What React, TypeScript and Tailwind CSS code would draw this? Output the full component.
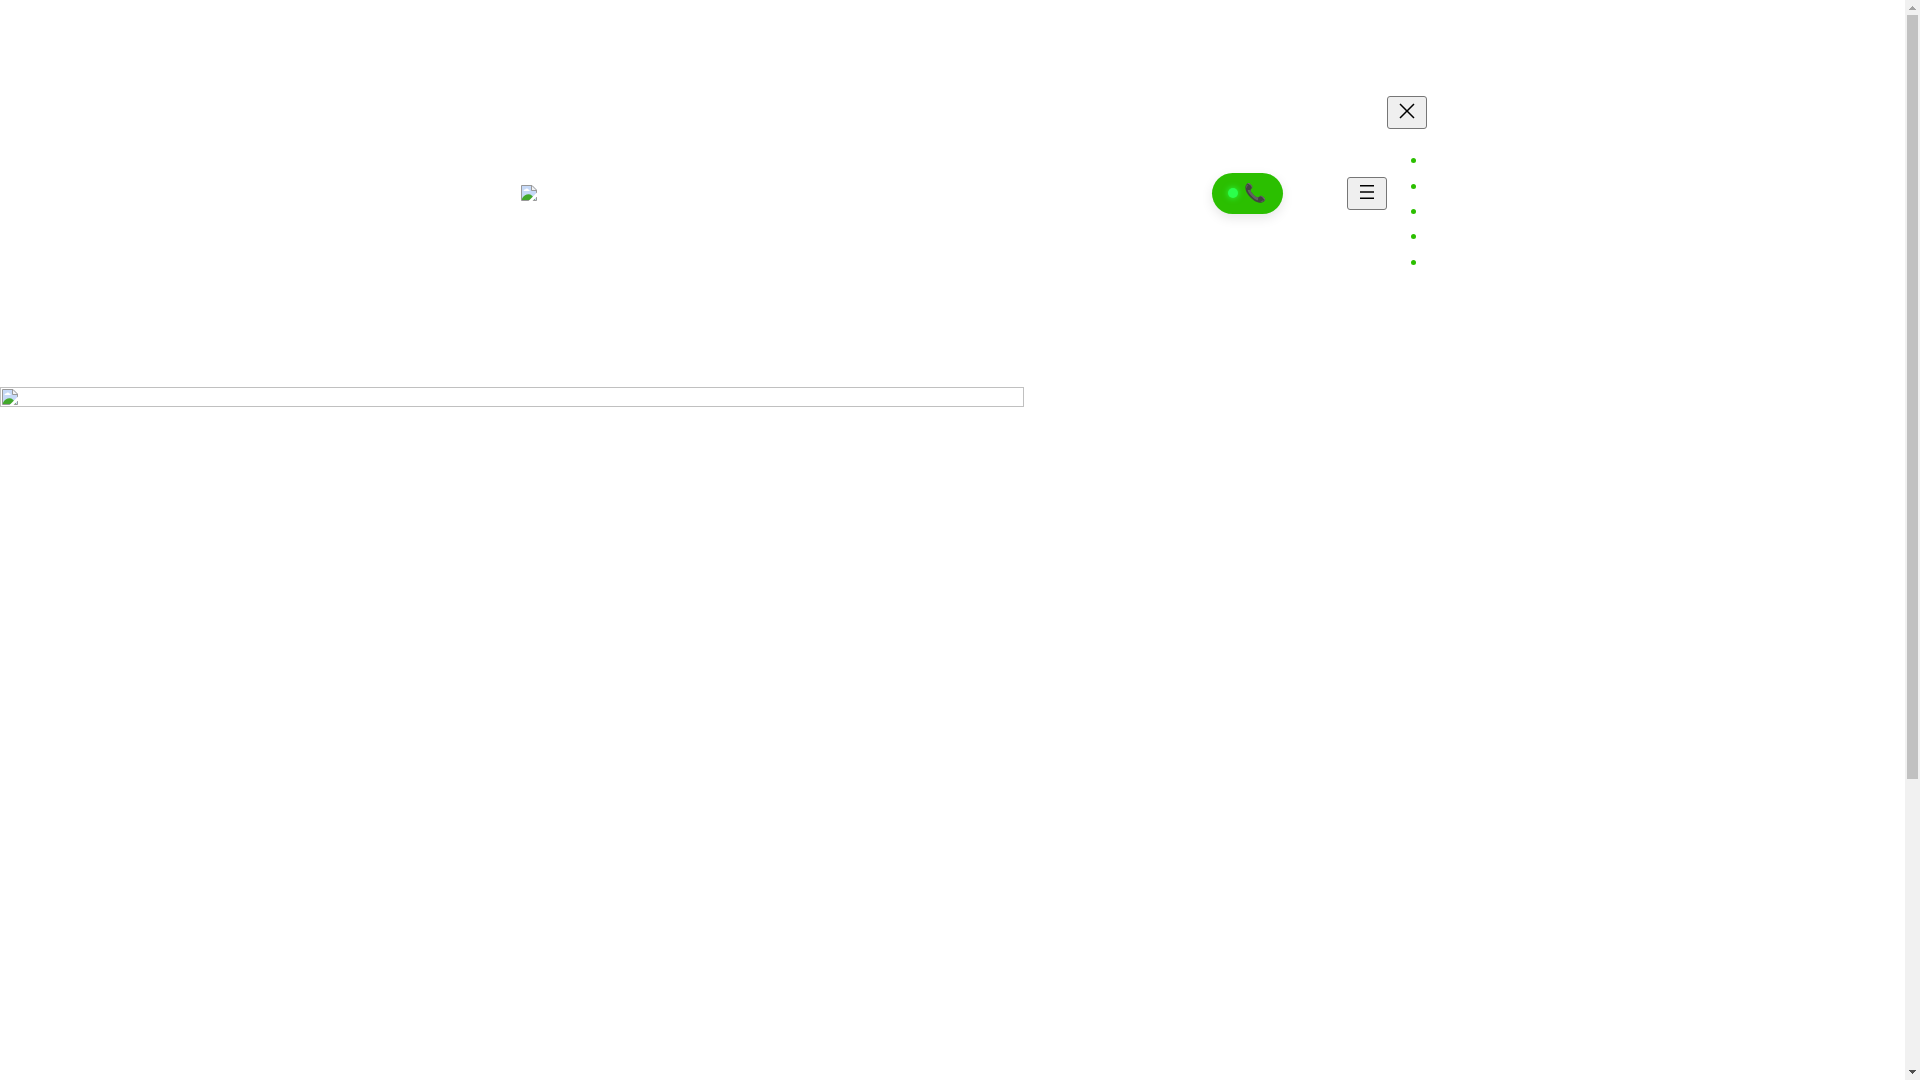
function BrokenImage() {
  return (
    <svg width="16" height="16" viewBox="0 0 16 16" className="block shrink-0" aria-hidden="true">
      <path d="M.5.5h10.500l4.500 4.500v10.500H.5z" fill="#c6d9f7" />
      <path d="M2.500 6c0-1.200.8-1.700 1.700-1.600C4.700 3 7 3.100 7.300 4.600c1 0 1.500.7 1.300 1.400z" fill="#fff" />
      <path d="M1 15v-1.500c2-3 4-4.300 6.500-4.300s4.800 2 6.500 5.800z" fill="#43a92c" />
      <path d="M10.500.5v5h5" fill="#f4f4f4" stroke="#999" />
      <path d="M.5.5h10.500l4.500 4.500v10.500H.5z" fill="none" stroke="#999" />
      <path d="M7.500 16 16 7.500v4L11.500 16z" fill="#fff" />
    </svg>
  )
}

const menuItems = ['1', '2', '3', '4', '5']

const iconButton =
  'flex h-[33px] w-10 justify-center rounded-[3px] border border-[#767676] bg-[#efefef] pt-[2px] text-black'

function Header() {
  return (
    <header className="py-24 pl-[59px] pr-4">
      <div className="mx-auto flex max-w-[906px] items-center">
        <a href="#" aria-label="Home" className="pb-[2px]">
          <BrokenImage />
        </a>

        <a
          href="#"
          aria-label="Call"
          className="ml-auto mr-16 flex h-[41px] w-[71px] items-center gap-[6px] rounded-full bg-[#2bbf00] pb-px pl-4 text-lg shadow-[0_4px_12px_rgba(0,0,0,0.1)]"
        >
          <span className="size-[10px] shrink-0 rounded-full bg-[#2bff4b] shadow-[0_0_6px_#2bff4b]" />
          <span>📞</span>
        </a>

        <nav className="flex items-center">
          <button type="button" aria-label="Open menu" className={iconButton}>
            <svg width="24" height="24" viewBox="0 0 24 24" fill="currentColor">
              <path d="M5 5v1.500h14V5H5Zm0 7.800h14v-1.500H5v1.500ZM5 19h14v-1.500H5V19Z" />
            </svg>
          </button>
          <div className="w-10 pb-[15px]">
            <button type="button" aria-label="Close menu" className={iconButton}>
              <svg width="24" height="24" viewBox="0 0 24 24" fill="currentColor">
                <path d="m13.060 12 6.470-6.470-1.060-1.060L12 10.940 5.530 4.470 4.470 5.530 10.940 12l-6.470 6.470 1.060 1.060L12 13.060l6.470 6.470 1.060-1.060L13.060 12Z" />
              </svg>
            </button>
            <ul className="mt-[19px] flex h-[127px] flex-col pl-6">
              {menuItems.map((item) => (
                <li key={item} className="flex flex-1 items-center">
                  <span className="size-[5px] rounded-full bg-[#2bbf00]" />
                </li>
              ))}
            </ul>
            <div className="h-px" />
          </div>
        </nav>
      </div>
    </header>
  )
}

function Scrollbar() {
  return (
    <div className="sticky top-0 flex h-screen w-[15px] shrink-0 flex-col items-center bg-[#f1f1f1]" aria-hidden="true">
      <svg width="15" height="15" viewBox="0 0 15 15" className="shrink-0" shapeRendering="crispEdges">
        <path d="M7 6h1v1h1v1h1v1h1v1H4V9h1V8h1V7h1z" fill="#a3a3a3" />
      </svg>
      <div className="min-h-0 w-full flex-1 px-[2px]">
        <div className="h-8/11 bg-[#c1c1c1]" />
      </div>
      <svg width="15" height="15" viewBox="0 0 15 15" className="shrink-0" shapeRendering="crispEdges">
        <path d="M4 5h7v1h-1v1H9v1H8v1H7V8H6V7H5V6H4z" fill="#505050" />
      </svg>
    </div>
  )
}

export default function App() {
  return (
    <div className="flex min-h-screen bg-white font-['Liberation_Sans',sans-serif]">
      <main className="min-w-0 flex-1">
        <Header />
        <div className="flex h-5 w-full max-w-[1024px] border border-[#c0c0c0] p-px">
          <BrokenImage />
        </div>
      </main>
      <Scrollbar />
    </div>
  )
}
